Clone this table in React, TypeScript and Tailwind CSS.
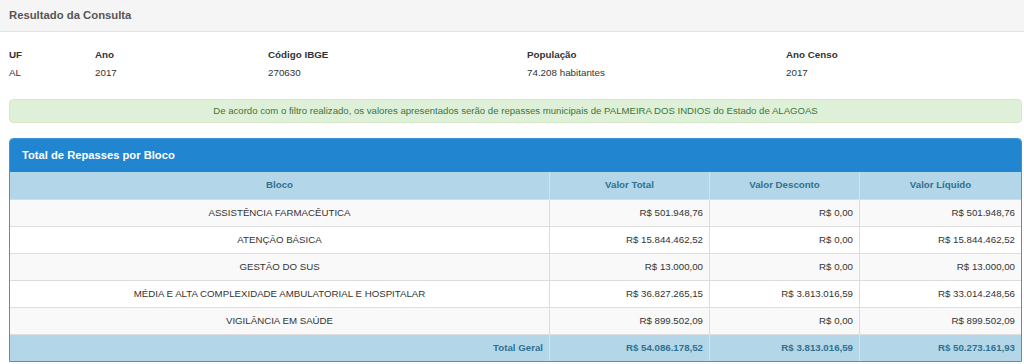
import React from "react";

const rows = [
  ["ASSISTÊNCIA FARMACÊUTICA", "R$ 501.948,76", "R$ 0,00", "R$ 501.948,76"],
  ["ATENÇÃO BÁSICA", "R$ 15.844.462,52", "R$ 0,00", "R$ 15.844.462,52"],
  ["GESTÃO DO SUS", "R$ 13.000,00", "R$ 0,00", "R$ 13.000,00"],
  ["MÉDIA E ALTA COMPLEXIDADE AMBULATORIAL E HOSPITALAR", "R$ 36.827.265,15", "R$ 3.813.016,59", "R$ 33.014.248,56"],
  ["VIGILÂNCIA EM SAÚDE", "R$ 899.502,09", "R$ 0,00", "R$ 899.502,09"],
];

const info = [
  ["UF", "AL", "w-[86px]"],
  ["Ano", "2017", "w-[173px]"],
  ["Código IBGE", "270630", "w-[259px]"],
  ["População", "74.208 habitantes", "w-[259px]"],
  ["Ano Censo", "2017", "w-[200px]"],
];

export default function App() {
  return (
    <div className="w-[1024px] h-[364px] overflow-hidden bg-white font-['Liberation_Sans',Arial,sans-serif] text-[#333]">
      <div className="h-[32px] bg-[#f5f5f5] border-b border-[#e3e3e3] px-[9px] flex items-center text-[11.3px] font-bold text-[#555]">
        Resultado da Consulta
      </div>

      <div className="flex pl-[9px] pt-[16px] text-[9.8px]">
        {info.map(([l, v, w]) => (
          <div key={l} className={`${w} flex flex-col gap-[4px]`}>
            <div className="h-[14px] leading-[14px] font-bold">{l}</div>
            <div className="h-[14px] leading-[14px]">{v}</div>
          </div>
        ))}
      </div>

      <div className="pl-[9px] pr-[2px]">
        <div className="mt-[19px] h-[24px] rounded-[4px] bg-[#dff0d8] border border-[#d6e9c6] flex items-center justify-center text-[9.6px] text-[#3c763d]">
          De acordo com o filtro realizado, os valores apresentados serão de repasses municipais de PALMEIRA DOS INDIOS do Estado de ALAGOAS
        </div>

        <div className="mt-[15px] border border-[#3d95d8] rounded-t-[4px] overflow-hidden">
          <div className="h-[33px] bg-[#2185d0] flex items-center pl-[12px] text-[11.2px] font-bold text-white">
            Total de Repasses por Bloco
          </div>
          <div className="grid grid-cols-[539px_160px_150px_1fr] text-[9.7px]">
            {["Bloco", "Valor Total", "Valor Desconto", "Valor Líquido"].map((h, i) => (
              <div
                key={h}
                className={`h-[27px] bg-[#b3d7e8] text-[#31708f] font-bold flex items-center justify-center ${i > 0 ? "border-l border-[#cfe4ef]" : ""}`}
              >
                {h}
              </div>
            ))}
            {rows.map((r, ri) =>
              r.map((c, ci) => (
                <div
                  key={ri + "-" + ci}
                  className={`h-[27px] border-t border-[#ddd] flex items-center ${ri % 2 === 0 ? "bg-[#f9f9f9]" : "bg-white"} ${ci === 0 ? "justify-center" : "justify-end pr-[6px] border-l"}`}
                >
                  {c}
                </div>
              ))
            )}
            {["Total Geral", "R$ 54.086.178,52", "R$ 3.813.016,59", "R$ 50.273.161,93"].map((c, ci) => (
              <div
                key={"t" + ci}
                className={`h-[27px] bg-[#b3d7e8] text-[#31708f] font-bold border-t border-[#ddd] flex items-center justify-end pr-[6px] ${ci > 0 ? "border-l border-l-[#cfe4ef]" : ""}`}
              >
                {c}
              </div>
            ))}
          </div>
        </div>
      </div>
    </div>
  );
}
